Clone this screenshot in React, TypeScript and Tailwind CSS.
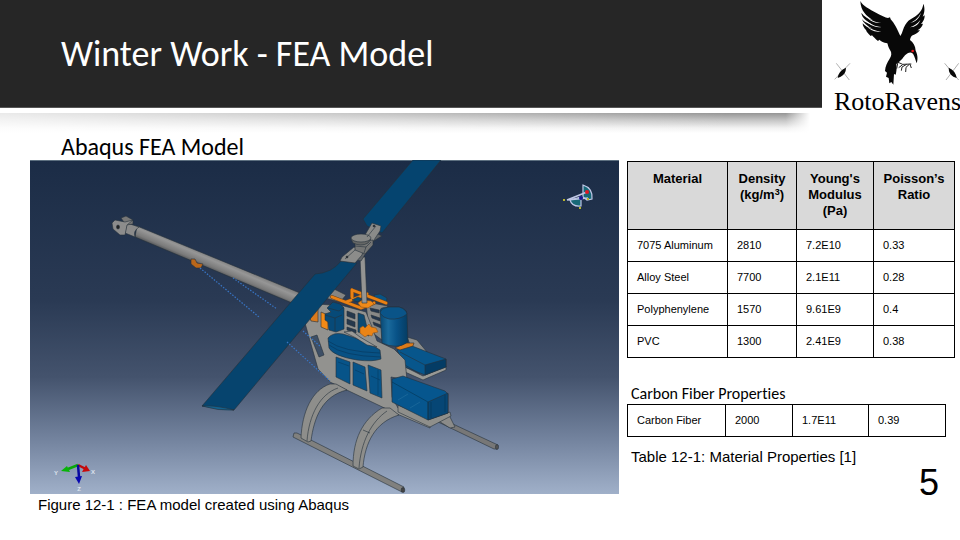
import React from "react";

const materials = [
  ["7075 Aluminum", "2810", "7.2E10", "0.33"],
  ["Alloy Steel", "7700", "2.1E11", "0.28"],
  ["Polyphenylene", "1570", "9.61E9", "0.4"],
  ["PVC", "1300", "2.41E9", "0.38"],
];

const carbonFiber = ["Carbon Fiber", "2000", "1.7E11", "0.39"];

function Raven() {
  return (
    <svg viewBox="42 0 378 255" className="block w-full" aria-hidden="true">
      <path
        fill="#080808"
        d="M121 3C128 18 150 28 168 38C184 47 196 52 204 54L210 52L212 58C222 68 232 88 241 108C248 98 249 84 256 74C262 64 270 58 278 54C296 44 308 30 310 11C316 26 313 40 308 50L314 46C314 60 308 66 303 72L309 71C306 82 300 86 292 91L300 91C292 101 286 103 278 106C273 109 271 114 270 120C280 127 286 138 287 152C292 162 295 175 290 190C287 180 284 170 279 161C268 151 256 163 247 176C241 182 234 188 229 192C231 206 229 216 227 224L222 222L220 254L214 246L208 250L206 234L198 230L201 218L195 213C196 198 202 188 208 178C215 168 216 158 210 150C204 141 204 134 202 130C190 128 184 124 178 119L174 123C166 117 160 110 156 106L152 108C144 100 140 96 138 90C132 84 128 78 128 70C134 78 146 84 158 86C142 78 130 68 125 56C130 64 146 72 158 74C140 64 126 54 124 38C132 50 146 57 158 60C140 48 122 34 121 3Z"
      />
      <path
        fill="#fff"
        d="M131 41C148 60 166 67 184 69C164 71 144 60 131 41ZM134 58C150 73 166 80 184 81C164 84 146 74 134 58ZM137 76C152 89 168 94 184 94C166 98 150 91 137 76ZM303 38C294 56 280 65 269 69C285 66 297 57 303 38ZM301 60C292 72 280 79 270 82C286 81 296 73 301 60Z"
      />
      <path
        d="M232 186l16 7 26-1M248 194l-12 9M260 193l-14 8-2 11M268 193l-10 9-1 14M270 193l4 11M234 186l-4 20"
        fill="none"
        stroke="#222"
        strokeWidth="3"
      />
      <circle cx="278" cy="153" r="4" fill="#f01418" />
      <g stroke="#888" strokeWidth="2">
        <path d="M49 190L88 240M90 190L44 238M374 190L416 240M416 190L378 240" />
      </g>
      <path d="M53 234Q56 212 78 203Q78 222 62 230ZM410 234Q407 212 386 203Q386 222 400 230Z" fill="#080808" />
    </svg>
  );
}

function HelicopterModel() {
  return (
    <svg viewBox="30 160 589 334" className="block w-full" role="img" aria-label="FEA model of a helicopter">
      <defs>
        <linearGradient id="sky" x1="0" y1="0" x2="0" y2="1">
          <stop offset="0" stopColor="#1b2c46" />
          <stop offset="0.42" stopColor="#2a3a54" />
          <stop offset="0.65" stopColor="#44536d" />
          <stop offset="0.84" stopColor="#74849f" />
          <stop offset="1" stopColor="#a0b0c9" />
        </linearGradient>
        <linearGradient id="boom" gradientUnits="userSpaceOnUse" x1="216" y1="256" x2="210" y2="270">
          <stop offset="0" stopColor="#777" />
          <stop offset="0.35" stopColor="#969696" />
          <stop offset="0.75" stopColor="#7a7a7a" />
          <stop offset="1" stopColor="#4b4e52" />
        </linearGradient>
        <linearGradient id="motor" x1="0" y1="0" x2="1" y2="0">
          <stop offset="0" stopColor="#07456f" />
          <stop offset="0.3" stopColor="#1a6a9c" />
          <stop offset="0.6" stopColor="#085287" />
          <stop offset="1" stopColor="#053c62" />
        </linearGradient>
      </defs>
      <rect x="30" y="160" width="589" height="334" fill="url(#sky)" />
      <path d="M30 160.500H619" stroke="#5d7080" />

      <g strokeLinejoin="round" stroke="#25303a" strokeWidth="0.600">
        {/* far skid */}
        <path d="M434 420L440 418L498 445L497 449L494 449Z" fill="#777" />
        <ellipse cx="497" cy="447" rx="1.500" ry="2.500" fill="#555" />
        <path d="M437 420L449 415L455 427L450 428Z" fill="#8b8b89" />

        {/* tail boom */}
        <path d="M137 226L300 293L292 303L135 237Z" fill="url(#boom)" />
        <path d="M127 223L139 227Q133 231 135 237L125 233Z" fill="#8a8a8a" />
        <path d="M121 218L126 216L133 220L133 224L126 225Z" fill="#777" />
        <path d="M112 223L115 220L125 222L133 220L127 225L125 235L120 235L113 229Z" fill="#8c8c8c" />
        <ellipse cx="118" cy="227" rx="1.500" ry="2" fill="#222" />
        <path d="M191 259L195 259L197 263L203 264L201 268L196 268L191 264Z" fill="#b9661a" />

        {/* far side frame and rear deck */}
        <path d="M318 296L334 289L346 295L340 302Z" fill="#858583" />
        <path d="M366 302L388 306L382 314L382 340L374 334L368 322Z" fill="#888886" />
        <path d="M370 308l9 2v3l-8-2zM371 315l9 3v3l-8-3zM373 322l8 3v3l-7-3z" fill="#23354c" />
        <path d="M374 295L380 294L387 298L386 304L376 302Z" fill="#095283" />
        <path d="M407 337L417 340L427 352L413 352Z" fill="#8b8b89" />
        <path d="M405 367L423 376L446 366L446 370L423 380L405 372Z" fill="#999995" />
        <path d="M397 350L412 346L446 359L446 367L425 375L405 367Z" fill="#07568c" />
        <path d="M425 365L446 359L446 367L425 375Z" fill="#043c65" />
        <path d="M425 365L400 352M420 374L405 365" fill="none" />

        {/* near side frame */}
        <path
          d="M318 304L344 306L366 312L372 327L377 341L394 349L405 360L407 380L391 377L392 397L398 408L430 423L430 428L397 414L330 382L318 369L305 323Z"
          fill="#92928f"
        />
        <path d="M398 405L430 419L450 412L451 416L430 427L398 412Z" fill="#8f8f8b" />
        <path d="M308 312L318 308L318 322L311 321Z" fill="#d97a1d" />
        <path d="M321 312L328 315L328 330L321 327Z" fill="#f28a17" />
        <path d="M347 311l8 3v5l-8-3zM347 319l8 3v5l-8-3zM347 327l9 3v3l-9-3z" fill="#26394d" />
        <path d="M358 313L364 315L369 336L358 332Z" fill="#0c4a72" />
        <path
          d="M360 328l3-2 2 2 4-4 2 3 5 1 2 4-5 1-1 3-4-1-3 2-5-4z"
          fill="#eb8416"
          stroke="#8f551e"
        />
        <path d="M327 308L333 302L340 304L344 308L344 329L336 332L329 330L328 322L325 320L325 314L331 312Z" fill="#074a78" />
        <path d="M328 308L339 311L344 307M325 315L335 318L342 315M335 318V331" fill="none" />
        <path d="M311 337L317 335L324 355L319 357Z" fill="#3d4f66" />

        {/* orange truss */}
        <g fill="none" strokeLinecap="round">
          <path d="M332 297L361 308L374 303M346 302L367 294M352 290L386 303M352 290V297" stroke="#6a451f" strokeWidth="4" />
          <path d="M332 297L361 308L374 303M346 302L367 294M352 290L386 303M352 290V297" stroke="#ea8114" strokeWidth="2.800" />
        </g>
        <path d="M358 303L362 300L371 301L374 304L368 308L361 307Z" fill="#f08a18" stroke="#8c541d" />
        <path d="M352 300L358 297L362 299L358 302Z" fill="#0a4a73" />

        {/* windows */}
        <g fill="#075489">
          <path d="M336 357L350 362L350 384L336 377Z" />
          <path d="M353 362L365 367L367 391L353 385Z" />
          <path d="M368 365L381 370L382 398L370 393Z" />
        </g>
        <path d="M338 362L349 366M355 370L364 374M371 376L380 380M378 370V395" fill="none" stroke="#06395f" />

        {/* motor */}
        <path d="M395 348L406 343L414 343L413 346L400 350Z" fill="#dc7a18" />
        <path d="M380 313Q378 307 388 307L399 307Q407 309 407 314L408 342Q397 350 382 343Z" fill="url(#motor)" />
        <path d="M380 313Q381 308 389 307L399 307Q406 309 407 314Q400 320 389 319Q383 318 380 313Z" fill="#0a5488" />

        {/* fuel tray */}
        <path d="M328 338Q333 332 343 334Q367 341 380 350L381 359Q373 362 357 360Q333 356 329 348Z" fill="#075184" />
        <path d="M328 341Q343 352 380 353M329 345Q343 356 381 357" fill="none" stroke="#06365a" />
        <path d="M344 332L352 331L360 337L377 347L367 345L356 338Z" fill="#9a9996" />

        {/* front battery box */}
        <path d="M392 379L403 376L445 391L448 394L448 413L428 420L392 402Z" fill="#06568e" />
        <path d="M428 402L448 393L448 413L428 420Z" fill="#064675" />
        <path d="M392 382L428 402V420M431 402V418M445 395V412" fill="none" stroke="#043453" />
        <path d="M398 400L408 394M410 408L420 402" fill="none" stroke="#24719f" />

        {/* near skid */}
        <path d="M294 433L297 433L404 487L402 492L293 437Z" fill="#80807e" />
        <ellipse cx="403" cy="490" rx="1.800" ry="2.500" fill="#444" />
        <path d="M330 384C312 390 302 412 301 438L308 442L311 441C314 418 322 396 347 390L336 384Z" fill="#8e8e8b" />
        <path d="M307 441C309 415 320 394 338 388" fill="none" />
        <path d="M382 408C362 420 353 440 353 466L359 469L363 467C365 443 375 422 399 415L390 408Z" fill="#8e8e8b" />
        <path d="M359 468C361 442 371 422 387 411M363 430L370 433" fill="none" />

        {/* mast, rotor blades and hub */}
        <path d="M360 257L365 257L367 303L362 303Z" fill="#949492" />
        <path d="M413 160L441 160L382 233L367 226L363 219Z" fill="#05446f" />
        <path d="M202 406L315 274Q332 273 341 261L357 263L234 410Z" fill="#06446e" />
        <path d="M202 406Q216 405 234 410Q218 411 202 406Z" fill="#14618d" />
        <path d="M378 234L382 236L372 242L368 250L361 261L357 260L360 250L371 239Z" fill="#606468" />
        <path d="M372 223L381 226L380 231L372 243L362 240Z" fill="#8a8b89" />
        <path d="M354 247L363 251L362 255L355 263L340 261L342 257Z" fill="#8c8c8a" />
        <path d="M355 243L373 240L373 245L365 254L355 250Z" fill="#747574" />
        <path d="M351 239L353 243Q361 247 368 243L371 239Z" fill="#646665" />
        <ellipse cx="361" cy="238" rx="10" ry="4" fill="#868785" />
        <path d="M367 237L376 226M345 259L355 250M355 246L366 247L371 242M366 247L364 253" fill="none" />
        <circle cx="374" cy="226" r="1" fill="#222" />
        <circle cx="347" cy="257" r="1" fill="#222" />
      </g>

      <g fill="none" stroke="#3875c5" strokeWidth="1.200" strokeDasharray="1.500 1.500">
        <path d="M200 268L259 317M287 342L330 381" />
        <path d="M233 278L277 309M303 331L321 347" />
      </g>

      {/* view compass */}
      <g strokeWidth="1.200" stroke="#bfc7e6">
        <path d="M583 185Q593 188 592 199L587 200L583 197Z" fill="#176877" />
        <path d="M570 200Q572 207 581 206L581 197Z" fill="#176877" />
        <path d="M567 200L587 192M567 200L588 198" fill="none" strokeWidth="1.600" />
      </g>
      <circle cx="581" cy="198" r="2" fill="#1b168c" />
      <circle cx="587" cy="192" r="2" fill="#e01825" />
      <path d="M564 199v2M580 207v2M588 198v2" stroke="#b8b42e" strokeWidth="2" />

      {/* axis triad */}
      <path d="M78 465L68 469" stroke="#08a808" strokeWidth="2.500" />
      <path d="M61 471L67 466L70 472Z" fill="#08b408" />
      <path d="M78 465L86 469" stroke="#c00a0a" strokeWidth="2.500" />
      <path d="M90 471L82 472L86 465Z" fill="#c80a0a" />
      <path d="M78 465L79 477" stroke="#0808a0" strokeWidth="2.500" />
      <path d="M75 477L82 476L79 484Z" fill="#0808b0" />
      <g fill="#dde3ee" fontFamily="Liberation Sans, sans-serif" fontSize="6" fontWeight="bold" textAnchor="middle">
        <text x="56" y="475">Y</text>
        <text x="93" y="474">X</text>
        <text x="79" y="491">Z</text>
      </g>
    </svg>
  );
}

function DataCells({ cells }: { cells: string[] }) {
  return (
    <tr className="h-8">
      {cells.map((cell) => (
        <td key={cell} className="border border-black pb-px pl-[9px] text-[11px] leading-4">
          {cell}
        </td>
      ))}
    </tr>
  );
}

export default function App() {
  return (
    <div className="min-h-screen bg-white font-['Liberation_Sans',Arial,sans-serif] text-black [font-variant-ligatures:none]">
      <header className="flex h-[134px]">
        <div className="flex-1">
          <div className="flex h-[108px] items-center border-b border-[#555] bg-[#262626] pl-[61px]">
            <h1 className="font-[Carlito,Calibri,Lato,sans-serif] text-[36px] leading-[44px] text-white">
              Winter Work - FEA Model
            </h1>
          </div>
          <div className="mt-[5px] mr-3 h-5 bg-[linear-gradient(to_right,rgba(255,255,255,0.8),rgba(255,255,255,0.5)_40%,rgba(255,255,255,0)_90%,rgba(255,255,255,0)_97%,white),linear-gradient(to_bottom,#959595,#c4c4c4_35%,#f2f2f2_75%,white)]" />
        </div>
        <div className="w-[138px] pl-3">
          <Raven />
          <p className="font-['Liberation_Serif',serif] text-[26px] leading-[34px]">RotoRavens</p>
        </div>
      </header>

      <main className="flex gap-2 pr-[5px] pl-[30px]">
        <section className="flex-1">
          <h2 className="h-[26px] pl-[31px] font-[Carlito,Calibri,Lato,sans-serif] text-[24px] leading-[26px]">
            Abaqus FEA Model
          </h2>
          <figure>
            <HelicopterModel />
            <figcaption className="pt-px pl-2 text-[15px] leading-5">
              Figure 12-1 : FEA model created using Abaqus
            </figcaption>
          </figure>
        </section>

        <aside className="w-[328px] pt-[27px]">
          <table className="w-full table-fixed border-collapse">
            <colgroup>
              <col className="w-[100px]" />
              <col className="w-[69px]" />
              <col className="w-[77px]" />
              <col />
            </colgroup>
            <thead>
              <tr className="h-[68px] bg-[#d9d9d9] align-top text-[13px] leading-4">
                <th className="border border-black pt-[9px]">Material</th>
                <th className="border border-black pt-[9px]">
                  Density
                  <br />
                  (kg/m<sup className="text-[9px] leading-none">3</sup>)
                </th>
                <th className="border border-black pt-[9px]">
                  Young's
                  <br />
                  Modulus
                  <br />
                  (Pa)
                </th>
                <th className="border border-black pt-[9px]">
                  Poisson’s
                  <br />
                  Ratio
                </th>
              </tr>
            </thead>
            <tbody>
              {materials.map((row) => (
                <DataCells key={row[0]} cells={row} />
              ))}
            </tbody>
          </table>

          <h3 className="mt-[26px] pl-1 font-[Carlito,Calibri,Lato,sans-serif] text-[16px] leading-5">
            Carbon Fiber Properties
          </h3>
          <div className="pr-[9px]">
            <table className="w-full table-fixed border-collapse">
              <colgroup>
                <col className="w-[98px]" />
                <col className="w-[67px]" />
                <col className="w-[76px]" />
                <col />
              </colgroup>
              <tbody>
                <DataCells cells={carbonFiber} />
              </tbody>
            </table>
          </div>
          <p className="mt-[10px] pl-1 text-[15px] leading-5">Table 12-1: Material Properties [1]</p>
          <p className="pr-4 text-right text-[36px] leading-8">5</p>
        </aside>
      </main>
    </div>
  );
}
